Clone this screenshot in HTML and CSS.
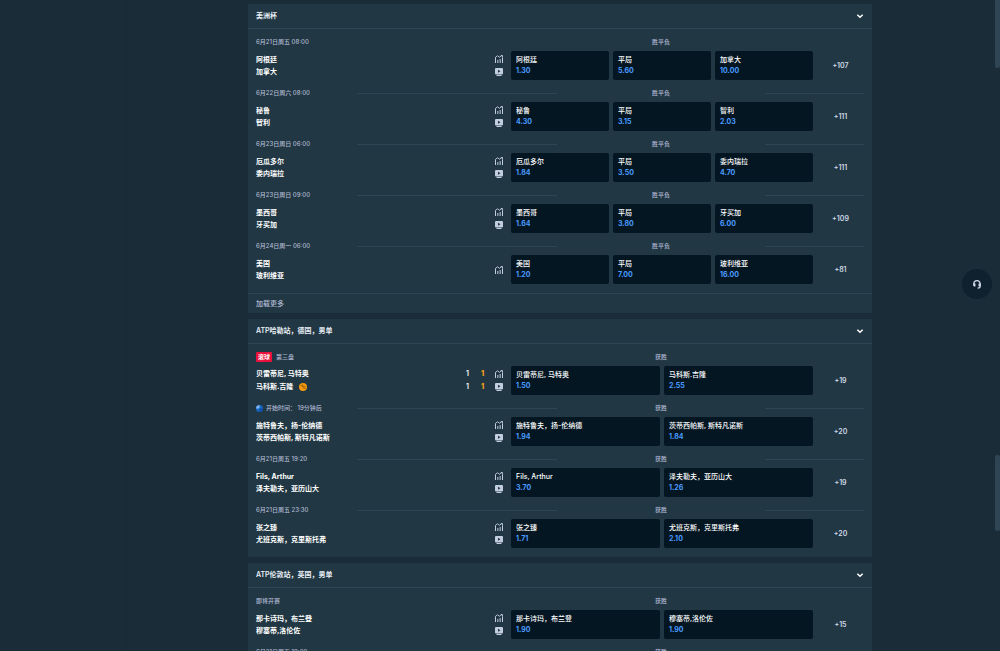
FILE: index.html
```html
<!DOCTYPE html>
<html lang="zh-CN">
<head>
<meta charset="utf-8">
<meta name="viewport" content="width=device-width, initial-scale=1">
<title>体育投注</title>
<link rel="stylesheet" href="styles.css">
</head>
<body>
<svg class="sprite" aria-hidden="true">
  <symbol id="stats" viewBox="0 0 16 16">
    <path d="M1 7V4.500L5 1.500l4 3 5-3.500M11.500 1H15v4" fill="none" stroke="currentColor" stroke-width="1.800"/>
    <path d="M0 6h2v10H0zM4.700 10h2v6h-2zM9.300 8h2v8h-2zM14 5h2v11h-2z" fill="currentColor"/>
  </symbol>
  <symbol id="video" viewBox="0 0 16 16">
    <path fill-rule="evenodd" d="M2 0h12a2 2 0 0 1 2 2v9a2 2 0 0 1-2 2H2a2 2 0 0 1-2-2V2a2 2 0 0 1 2-2zm4 3.500v6l5-3zM3 14h10v2H3z" fill="currentColor"/>
  </symbol>
  <symbol id="chevron" viewBox="0 0 12 12">
    <path d="M2 4l4 4 4-4" fill="none" stroke="currentColor" stroke-width="2.200"/>
  </symbol>
  <symbol id="ball" viewBox="0 0 16 16">
    <circle cx="8" cy="8" r="8" fill="#f59a0c"/>
    <path d="M3 5c3 0 3 1 4.500 3s3 3 5.500 3M7 3c0 2 1 3 2.500 4S12 8 13.500 7" fill="none" stroke="#7a4a10" stroke-width="1.500"/>
  </symbol>
  <symbol id="clock" viewBox="0 0 16 16">
    <circle cx="8" cy="8" r="8" fill="#1668c4"/>
    <path d="M8 8V0a8 8 0 0 0-8 8z" fill="#7db4f0"/>
    <path d="M8 8h8a8 8 0 0 1-8 8z" fill="#0d4f9e"/>
  </symbol>
</svg>
<div class="app">
  <aside class="sidebar"></aside>
  <main class="content">

    <section class="card">
      <button class="card-head" type="button"><span>美洲杯</span><svg class="chevron"><use href="#chevron"/></svg></button>
      <article class="event">
        <div class="meta"><time class="when">6月21日周五 08:00</time><i></i><span class="market">胜平负</span><i></i></div>
        <div class="line">
          <div class="info"><div class="teams"><span>阿根廷</span><span>加拿大</span></div><div class="icons"><svg><use href="#stats"/></svg><svg><use href="#video"/></svg></div></div>
          <div class="odds"><button type="button">阿根廷<b>1.30</b></button><button type="button">平局<b>5.60</b></button><button type="button">加拿大<b>10.00</b></button></div>
          <a class="more" href="#">+107</a>
        </div>
      </article>
      <article class="event">
        <div class="meta"><time class="when">6月22日周六 08:00</time><i></i><span class="market">胜平负</span><i></i></div>
        <div class="line">
          <div class="info"><div class="teams"><span>秘鲁</span><span>智利</span></div><div class="icons"><svg><use href="#stats"/></svg><svg><use href="#video"/></svg></div></div>
          <div class="odds"><button type="button">秘鲁<b>4.30</b></button><button type="button">平局<b>3.15</b></button><button type="button">智利<b>2.03</b></button></div>
          <a class="more" href="#">+111</a>
        </div>
      </article>
      <article class="event">
        <div class="meta"><time class="when">6月23日周日 06:00</time><i></i><span class="market">胜平负</span><i></i></div>
        <div class="line">
          <div class="info"><div class="teams"><span>厄瓜多尔</span><span>委内瑞拉</span></div><div class="icons"><svg><use href="#stats"/></svg><svg><use href="#video"/></svg></div></div>
          <div class="odds"><button type="button">厄瓜多尔<b>1.84</b></button><button type="button">平局<b>3.50</b></button><button type="button">委内瑞拉<b>4.70</b></button></div>
          <a class="more" href="#">+111</a>
        </div>
      </article>
      <article class="event">
        <div class="meta"><time class="when">6月23日周日 09:00</time><i></i><span class="market">胜平负</span><i></i></div>
        <div class="line">
          <div class="info"><div class="teams"><span>墨西哥</span><span>牙买加</span></div><div class="icons"><svg><use href="#stats"/></svg><svg><use href="#video"/></svg></div></div>
          <div class="odds"><button type="button">墨西哥<b>1.64</b></button><button type="button">平局<b>3.80</b></button><button type="button">牙买加<b>6.00</b></button></div>
          <a class="more" href="#">+109</a>
        </div>
      </article>
      <article class="event">
        <div class="meta"><time class="when">6月24日周一 06:00</time><i></i><span class="market">胜平负</span><i></i></div>
        <div class="line">
          <div class="info"><div class="teams"><span>美国</span><span>玻利维亚</span></div><div class="icons"><svg><use href="#stats"/></svg></div></div>
          <div class="odds"><button type="button">美国<b>1.20</b></button><button type="button">平局<b>7.00</b></button><button type="button">玻利维亚<b>16.00</b></button></div>
          <a class="more" href="#">+81</a>
        </div>
      </article>
      <button class="load-more" type="button">加载更多</button>
    </section>

    <section class="card">
      <button class="card-head" type="button"><span>ATP哈勒站，德国，男单</span><svg class="chevron"><use href="#chevron"/></svg></button>
      <article class="event">
        <div class="meta"><span class="when"><em class="live">滚球</em>第三盘</span><i></i><span class="market">获胜</span><i></i></div>
        <div class="line">
          <div class="info"><div class="teams spaced"><span>贝雷蒂尼, 马特奥</span><span>马科斯.吉隆<svg class="ball"><use href="#ball"/></svg></span></div><div class="scores"><span>1</span><b>1</b><span>1</span><b>1</b></div><div class="icons"><svg><use href="#stats"/></svg><svg><use href="#video"/></svg></div></div>
          <div class="odds"><button type="button">贝雷蒂尼, 马特奥<b>1.50</b></button><button type="button">马科斯.吉隆<b>2.55</b></button></div>
          <a class="more" href="#">+19</a>
        </div>
      </article>
      <article class="event">
        <div class="meta"><span class="when"><svg class="clock"><use href="#clock"/></svg>开始时间： 19分钟后</span><i></i><span class="market">获胜</span><i></i></div>
        <div class="line">
          <div class="info"><div class="teams"><span>施特鲁夫，扬-伦纳德</span><span>茨蒂西帕斯, 斯特凡诺斯</span></div><div class="icons"><svg><use href="#stats"/></svg><svg><use href="#video"/></svg></div></div>
          <div class="odds"><button type="button">施特鲁夫，扬-伦纳德<b>1.94</b></button><button type="button">茨蒂西帕斯, 斯特凡诺斯<b>1.84</b></button></div>
          <a class="more" href="#">+20</a>
        </div>
      </article>
      <article class="event">
        <div class="meta"><time class="when">6月21日周五 19:20</time><i></i><span class="market">获胜</span><i></i></div>
        <div class="line">
          <div class="info"><div class="teams"><span>Fils, Arthur</span><span>泽夫勒夫，亚历山大</span></div><div class="icons"><svg><use href="#stats"/></svg><svg><use href="#video"/></svg></div></div>
          <div class="odds"><button type="button">Fils, Arthur<b>3.70</b></button><button type="button">泽夫勒夫，亚历山大<b>1.26</b></button></div>
          <a class="more" href="#">+19</a>
        </div>
      </article>
      <article class="event">
        <div class="meta"><time class="when">6月21日周五 23:30</time><i></i><span class="market">获胜</span><i></i></div>
        <div class="line">
          <div class="info"><div class="teams"><span>张之臻</span><span>尤班克斯，克里斯托弗</span></div><div class="icons"><svg><use href="#stats"/></svg><svg><use href="#video"/></svg></div></div>
          <div class="odds"><button type="button">张之臻<b>1.71</b></button><button type="button">尤班克斯，克里斯托弗<b>2.10</b></button></div>
          <a class="more" href="#">+20</a>
        </div>
      </article>
    </section>

    <section class="card">
      <button class="card-head" type="button"><span>ATP伦敦站，英国，男单</span><svg class="chevron"><use href="#chevron"/></svg></button>
      <article class="event">
        <div class="meta"><span class="when">即将开赛</span><i></i><span class="market">获胜</span><i></i></div>
        <div class="line">
          <div class="info"><div class="teams"><span>那卡诗玛，布兰登</span><span>穆塞蒂,洛伦佐</span></div><div class="icons"><svg><use href="#stats"/></svg><svg><use href="#video"/></svg></div></div>
          <div class="odds"><button type="button">那卡诗玛，布兰登<b>1.90</b></button><button type="button">穆塞蒂,洛伦佐<b>1.90</b></button></div>
          <a class="more" href="#">+15</a>
        </div>
      </article>
      <article class="event">
        <div class="meta"><time class="when">6月21日周五 19:00</time><i></i><span class="market">获胜</span><i></i></div>
      </article>
    </section>
  </main>
  <div class="rail"><span class="thumb"></span><span class="thumb faint"></span></div>
</div>
<button class="support" type="button" aria-label="在线客服">
  <svg viewBox="0 0 16 16"><path d="M3 10V7.500a5 5 0 0 1 10 0V12q0 2.500-4 2.500" fill="none" stroke="currentColor" stroke-width="2"/><path d="M2 7h3.500v5H4a2 2 0 0 1-2-2zM10.500 7H14v3a2 2 0 0 1-2 2h-1.500z" fill="currentColor"/></svg>
</button>
</body>
</html>
```
FILE: styles.css
```css
* { box-sizing: border-box; }

:root {
  --page: #1a2c38;
  --card: #213743;
  --line: #2f4553;
  --dark: #041622;
  --muted: #b1bad3;
  --blue: #4a9bff;
}

body {
  margin: 0;
  height: 100vh;
  overflow: hidden;
  background: var(--page);
  color: #fff;
  font: 500 7px/12px Inter, "Noto Sans CJK SC", sans-serif;
}

button {
  border: 0;
  padding: 0;
  background: none;
  color: inherit;
  font: inherit;
  text-align: left;
  cursor: pointer;
}

.sprite { display: none; }

.app {
  display: flex;
  height: 100%;
  overflow: hidden;
}

.sidebar {
  flex: none;
  width: 127px;
  border-right: 1px solid #172935;
}

.content {
  flex: 1;
  display: flex;
  flex-direction: column;
  gap: 6px;
  padding: 4px 123px 0 121px;
}

.card {
  flex: none;
  padding-bottom: 9px;
  background: var(--card);
}

.card:has(.load-more) { padding-bottom: 0; }

.card-head {
  display: flex;
  justify-content: space-between;
  align-items: center;
  width: 100%;
  height: 25px;
  padding: 0 8px;
  border-bottom: 1px solid var(--line);
  color: #e8eef5;
  font-weight: 600;
}

.chevron { width: 8px; height: 8px; color: #fff; }

.event { padding: 0 8px; }

.meta {
  display: grid;
  grid-template-columns: 101fr 200fr 208fr 99fr;
  align-items: center;
  height: 22px;
  padding-top: 4px;
  color: var(--muted);
  font-size: 6px;
  white-space: nowrap;
}

.meta i { height: 1px; background: var(--line); }
.card-head + .event .meta i { visibility: hidden; }

.when { display: flex; align-items: center; }
.market { text-align: center; }

.live {
  margin-right: 4px;
  padding: 0 2px;
  border-radius: 1px;
  background: #e9113c;
  color: #fff;
  font-style: normal;
  font-weight: 700;
  line-height: 10px;
}

.clock { width: 7px; height: 7px; margin-right: 3px; }

.line {
  display: grid;
  grid-template-columns: 251fr 302fr 47fr;
  column-gap: 4px;
  align-items: center;
}

.info {
  display: flex;
  align-items: center;
  gap: 10px;
  padding-right: 4px;
}

.teams {
  flex: 1;
  display: flex;
  flex-direction: column;
  font-weight: 700;
}

.teams.spaced { gap: 1px; }

.teams span { display: flex; align-items: center; }

.ball { width: 8px; height: 8px; margin-left: 6px; }

.scores {
  display: grid;
  grid-template-columns: 5px 5px;
  gap: 1px 10px;
  font-weight: 600;
  text-align: center;
}

.scores b { color: #ee9a1a; }

.icons {
  display: flex;
  flex-direction: column;
  gap: 5px;
  color: #c3cde0;
}

.icons svg { width: 8px; height: 8px; }

.odds {
  display: flex;
  gap: 4px;
}

.odds button {
  flex: 1 1 0;
  height: 29px;
  padding: 0 5px 1px;
  border-radius: 2px;
  background: var(--dark);
  line-height: 11px;
}

.odds b {
  display: block;
  color: var(--blue);
  font-weight: 700;
}

.more {
  color: #d0d9e8;
  font-weight: 600;
  text-align: center;
  text-decoration: none;
}

.load-more {
  display: block;
  width: 100%;
  height: 20px;
  margin-top: 9px;
  padding: 0 8px;
  border-top: 1px solid var(--line);
  color: var(--muted);
}

.rail {
  flex: none;
  display: flex;
  flex-direction: column;
  justify-content: space-between;
  width: 5px;
  padding-bottom: 120px;
}

.thumb {
  height: 68px;
  border-radius: 0 0 2px 2px;
  background: var(--line);
}

.thumb.faint { height: 76px; border-radius: 2px; }

.support {
  position: fixed;
  top: 269px;
  right: 8px;
  display: flex;
  align-items: center;
  justify-content: center;
  width: 30px;
  height: 30px;
  border-radius: 50%;
  background: #0f212e;
  color: #d5dceb;
}

.support svg { width: 10px; height: 10px; }
```
